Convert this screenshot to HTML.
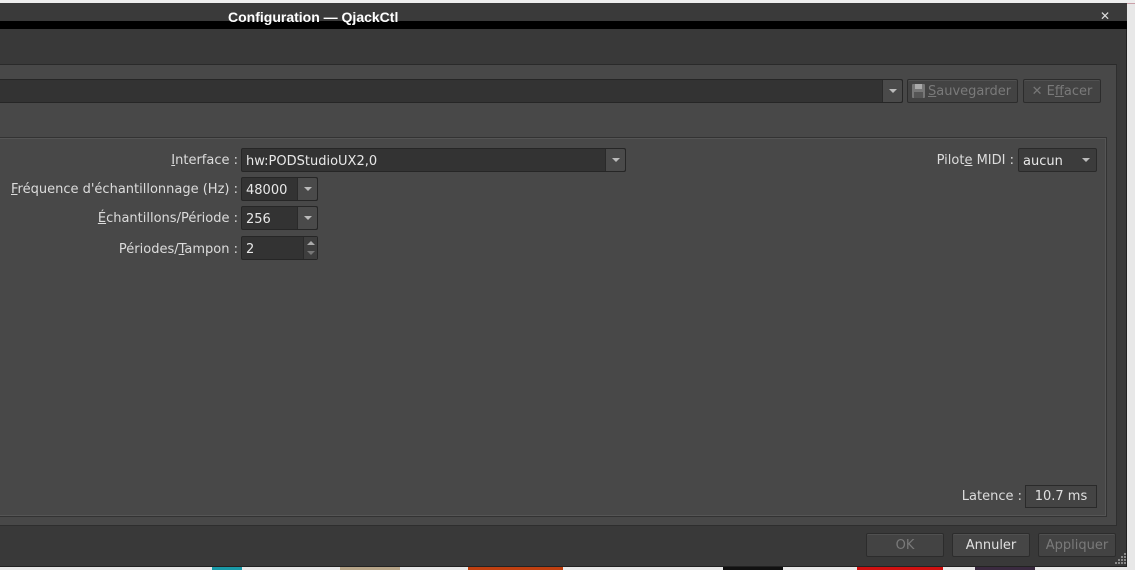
<!DOCTYPE html>
<html><head><meta charset="utf-8"><style>
*{box-sizing:border-box;margin:0;padding:0}
body{width:1135px;height:570px;overflow:hidden;background:#e8e8e8;position:relative;font-family:"DejaVu Sans","Liberation Sans",sans-serif;font-size:13px;color:#dcdcdc}
.abs{position:absolute}
#topstrip{left:0;top:0;width:1135px;height:4px;background:#eee;border-bottom:1px solid #c9a0a8}
#win{left:0;top:3px;width:1127px;height:564px;background:#393939;border-right:1px solid #222;border-bottom:1px solid #222}
#title{left:0;top:3px;width:1127px;height:18px;background:#3a3a3a}
#ttext{left:228px;top:9px;font-family:"Liberation Sans Narrow","Liberation Sans",sans-serif;font-weight:bold;font-size:14px;color:#fff;z-index:5;line-height:16px}
#black{left:0;top:21px;width:1127px;height:8px;background:#000}
#close{left:1100px;top:9px;color:#ddd;font-size:12px;font-weight:bold;z-index:5}
#panel{left:-2px;top:64px;width:1119px;height:462px;background:#484848;border:1px solid #2e2e2e;border-top-color:#2a2a2a}
#group{left:-2px;top:137px;width:1109px;height:380px;border:1px solid #333;box-shadow:inset 0 0 0 1px #555}
.combo{position:absolute;height:24px;background:#333;border:1px solid #262626;border-radius:2px;color:#e8e8e8;padding:5px 4px 0}
.arrow{position:absolute;right:0;top:0;width:20px;height:22px;background:#4a4a4a;border-left:1px solid #2a2a2a;border-radius:0 2px 2px 0}
.arrow:after{content:"";position:absolute;left:6px;top:9px;border-left:4px solid transparent;border-right:4px solid transparent;border-top:4px solid #bbb}
.btn{position:absolute;height:24px;background:#434343;border:1px solid #2c2c2c;border-radius:2px;box-shadow:inset 0 1px 0 #505050;text-align:center;line-height:23px;color:#7a7a7a}
.lbl{position:absolute;text-align:right;color:#dcdcdc}
u{text-decoration:underline}
</style></head><body>
<div id="topstrip" class="abs"></div>
<div class="abs" style="top:566px;left:212px;width:30px;height:4px;background:#1a9aa8"></div>
<div class="abs" style="top:566px;left:340px;width:60px;height:4px;background:#b8a68a"></div>
<div class="abs" style="top:566px;left:468px;width:95px;height:4px;background:#c04010"></div>
<div class="abs" style="top:566px;left:723px;width:60px;height:4px;background:#111"></div>
<div class="abs" style="top:566px;left:857px;width:86px;height:4px;background:#d01010"></div>
<div class="abs" style="top:566px;left:975px;width:60px;height:4px;background:#3a2a40"></div>
<div id="win" class="abs"></div>
<div id="title" class="abs"></div>
<div id="black" class="abs"></div>
<div id="ttext" class="abs">Configuration — QjackCtl</div>
<div id="close" class="abs">✕</div>
<div id="panel" class="abs"></div>
<div class="combo" style="left:-2px;top:79px;width:905px;height:24px"><div class="arrow"></div></div>
<div class="btn" style="left:907px;top:79px;width:111px">
 <span style="position:absolute;left:4px;top:4px;width:13px;height:14px;background:#777;border-radius:1px"><span style="position:absolute;left:3px;top:0;width:7px;height:5px;background:#aaa"></span><span style="position:absolute;left:2px;top:8px;width:9px;height:6px;background:#555"></span></span>
 <span style="position:absolute;left:20px"><u>S</u>auvegarder</span></div>
<div class="btn" style="left:1023px;top:79px;width:78px"><span style="color:#777">✕</span> E<u>f</u>facer</div>
<div id="group" class="abs"></div>
<div class="lbl" style="left:0;width:238px;top:153px"><u>I</u>nterface :</div>
<div class="combo" style="left:241px;top:148px;width:385px">hw:PODStudioUX2,0<div class="arrow"></div></div>
<div class="lbl" style="left:0;width:238px;top:182px"><u>F</u>réquence d'échantillonnage (Hz) :</div>
<div class="combo" style="left:241px;top:177px;width:77px">48000<div class="arrow"></div></div>
<div class="lbl" style="left:0;width:238px;top:211px"><u>É</u>chantillons/Période :</div>
<div class="combo" style="left:241px;top:206px;width:77px">256<div class="arrow"></div></div>
<div class="lbl" style="left:0;width:238px;top:242px">Périodes/<u>T</u>ampon :</div>
<div class="combo" style="left:241px;top:236px;width:77px">2<div style="position:absolute;right:0;top:0;width:14px;height:22px;background:#3e3e3e;border-left:1px solid #2a2a2a"><svg width="14" height="22" style="position:absolute;left:0;top:0"><path d="M3 8 L7 4 L11 8Z" fill="#aaa"/><path d="M3 14 L7 18 L11 14Z" fill="#777"/></svg></div></div>
<div class="lbl" style="left:880px;width:134px;top:153px">Pilot<u>e</u> MIDI :</div>
<div class="combo" style="left:1018px;top:148px;width:79px;background:#3c3c3c;border-color:#2a2a2a">aucun<div class="arrow" style="background:none;border:none"></div></div>
<div class="lbl" style="left:900px;width:122px;top:489px">Latence :</div>
<div class="abs" style="left:1025px;top:485px;width:72px;height:23px;border:1px solid #2a2a2a;background:#444;text-align:center;line-height:22px;color:#e0e0e0">10.7 ms</div>
<div class="btn" style="left:866px;top:533px;width:78px">OK</div>
<div class="btn" style="left:952px;top:533px;width:78px;color:#e0e0e0;background:#464646">Annuler</div>
<div class="btn" style="left:1038px;top:533px;width:78px">Appliquer</div>
<svg class="abs" style="left:1115px;top:552px" width="12" height="12"><g fill="#888"><rect x="9" y="1" width="2" height="2"/><rect x="6" y="4" width="2" height="2"/><rect x="9" y="4" width="2" height="2"/><rect x="3" y="7" width="2" height="2"/><rect x="6" y="7" width="2" height="2"/><rect x="9" y="7" width="2" height="2"/><rect x="0" y="10" width="2" height="2"/><rect x="3" y="10" width="2" height="2"/><rect x="6" y="10" width="2" height="2"/><rect x="9" y="10" width="2" height="2"/></g></svg>
</body></html>
